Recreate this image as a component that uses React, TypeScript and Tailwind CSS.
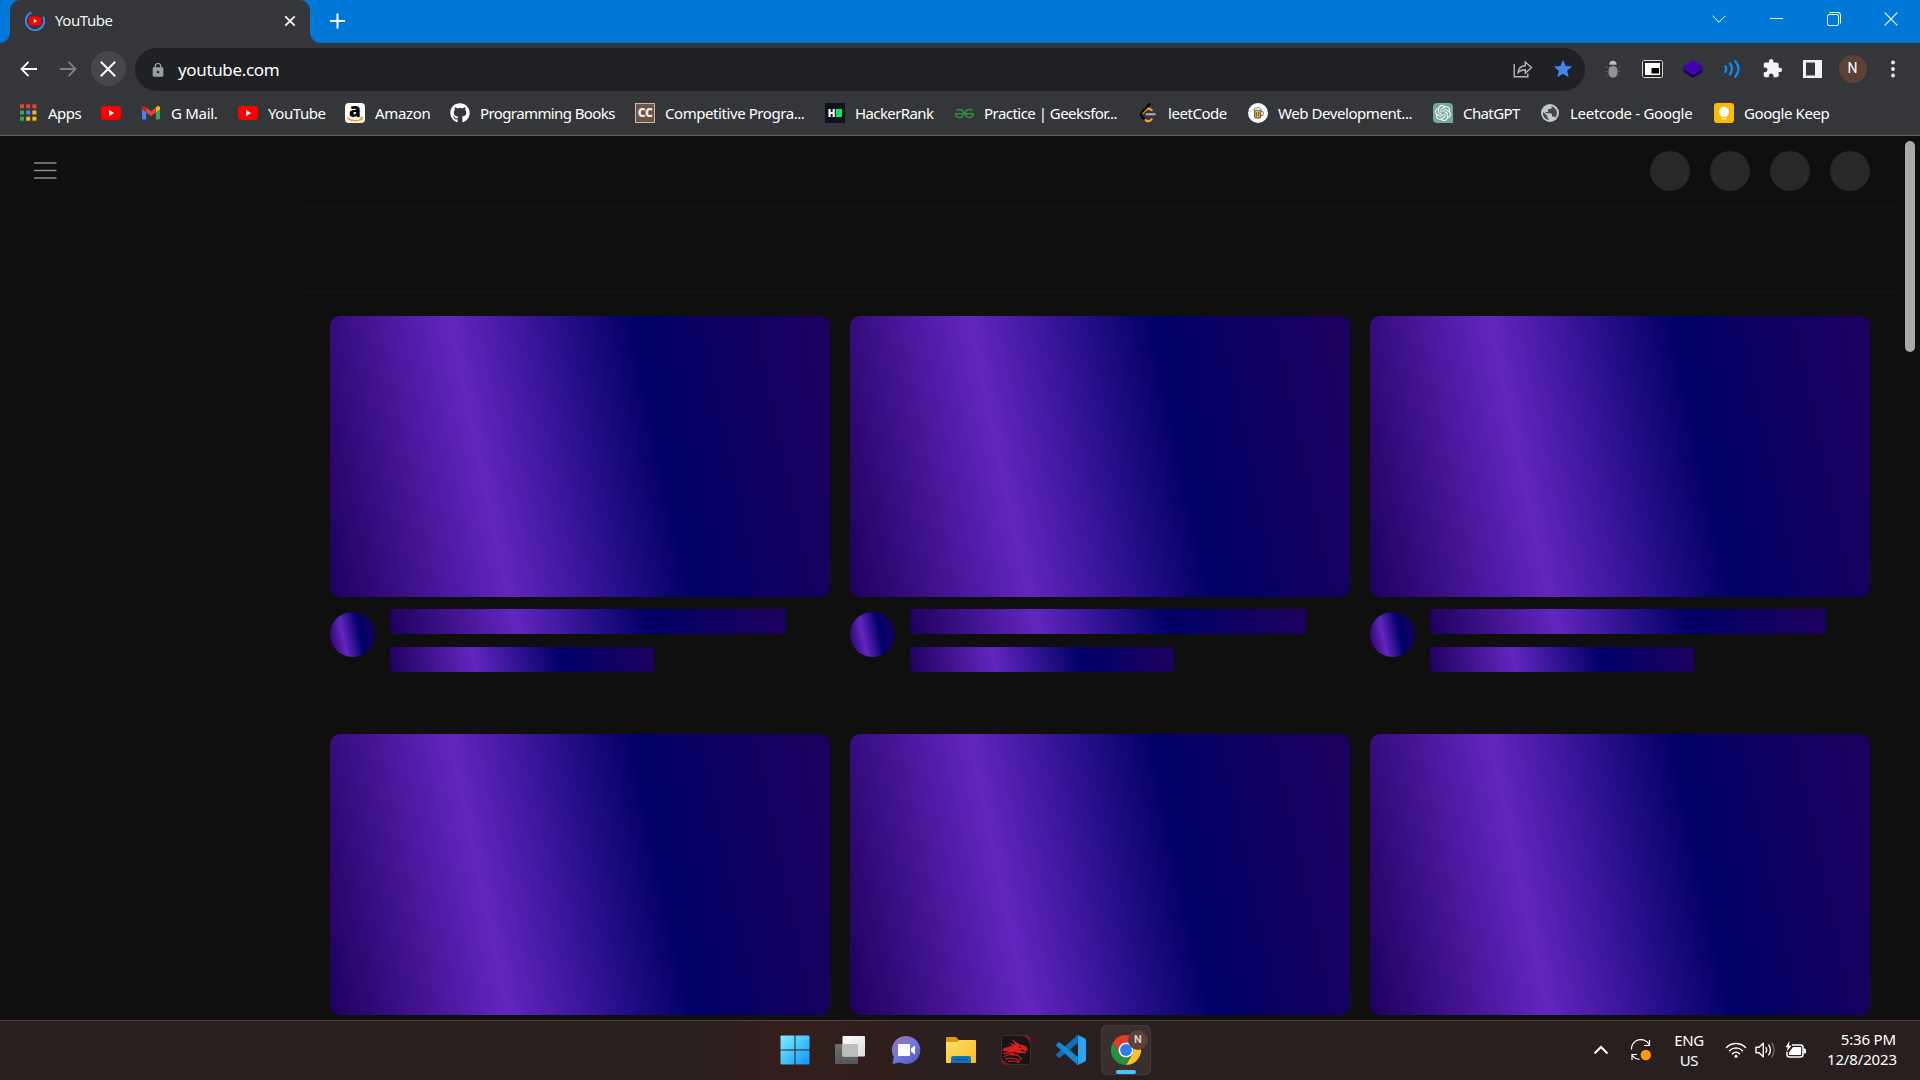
import type { ReactNode } from "react";
import { FaGithub } from "react-icons/fa";
import { SiGeeksforgeeks, SiOpenai } from "react-icons/si";
import { MdExtension, MdStar, MdLock } from "react-icons/md";

function YouTubeIcon({ size = 20 }: { size?: number }) {
  return (
    <svg width={size} height={size} viewBox="0 0 20 20">
      <rect x="0" y="3" width="20" height="14" rx="3.4" fill="#ff0000" />
      <path d="M8 7l5.2 3L8 13z" fill="#fff" />
    </svg>
  );
}

function AppsIcon() {
  const colors = ["#ea4335", "#ea4335", "#ea4335", "#34a853", "#4285f4", "#fbbc05", "#34a853", "#fbbc05", "#fbbc05"];
  return (
    <svg width="20" height="20" viewBox="0 0 20 20">
      {colors.map((c, i) => (
        <rect key={i} x={2 + (i % 3) * 6.2} y={1.3 + Math.floor(i / 3) * 6.2} width="4" height="4" fill={c} />
      ))}
    </svg>
  );
}

function GmailIcon() {
  return (
    <svg width="20" height="20" viewBox="0 0 20 20">
      <path d="M1 6v9.2c0 .8.5 1.3 1.300 1.300H5.200V9.300z" fill="#4285f4" />
      <path d="M19 6v9.200c0 .8-.5 1.300-1.300 1.300h-2.900V9.300z" fill="#34a853" />
      <path d="M14.800 4.700v4.800L19 6.300V5c0-1.700-1.800-2.500-3-1.500z" fill="#fbbc04" />
      <path d="M1 5c0-1.700 1.800-2.500 3-1.500l1.200 1.200v4.800L1 6.300z" fill="#c5221f" />
      <path d="M5.200 4.500L10 8.200l4.800-3.700v5L10 13.100 5.200 9.500z" fill="#ea4335" />
    </svg>
  );
}

function AmazonIcon() {
  return (
    <span className="relative flex h-5 w-5 items-center justify-center rounded-[4px] bg-white">
      <span className="-mt-[5px] font-['Open_Sans',sans-serif] text-[19px] leading-none font-extrabold text-black">a</span>
      <svg className="absolute inset-0" width="20" height="20" viewBox="0 0 20 20">
        <path d="M2.500 15.200c4.200 3.300 10.400 3.300 14 .8" stroke="#ff9900" strokeWidth="1.500" fill="none" strokeLinecap="round" />
        <path d="M14.600 14.600l3.200-.2-.9 3" stroke="#ff9900" strokeWidth="1.100" fill="none" />
      </svg>
    </span>
  );
}

function CodeChefIcon() {
  return (
    <span className="flex h-5 w-5 items-center justify-center border border-[#c9b8a8] bg-[#6f5544] font-['Open_Sans',sans-serif] text-[12px] leading-none font-extrabold tracking-[-0.5px] text-[#f3ece4]">
      CC
    </span>
  );
}

function HackerRankIcon() {
  return (
    <span className="flex h-5 w-5 items-center justify-center gap-px bg-[#0e141e]">
      <span className="font-['Open_Sans',sans-serif] text-[10px] leading-none font-extrabold text-white">H</span>
      <span className="h-2 w-[6px] bg-[#00ea64]" />
    </span>
  );
}

function LeetCodeIcon() {
  return (
    <svg width="20" height="20" viewBox="0 0 20 20" fill="none" strokeLinecap="round">
      <path d="M13.800 7.300c-2-2-4.200-2.100-6-.3L4.500 10.300" stroke="#ffa116" strokeWidth="2" />
      <path d="M11.500 1.200L4.600 8.300c-2.200 2.100-1.800 4.200-.3 5.600l2.600 2.600" stroke="#070706" strokeWidth="2.400" />
      <path d="M7.600 17.100c1.800 1.700 4.300 1.500 6-.7" stroke="#ffa116" strokeWidth="2.300" />
      <path d="M8.600 11.200h8.200" stroke="#b3b3b3" strokeWidth="2" />
    </svg>
  );
}

function BeerIcon() {
  return (
    <svg width="20" height="20" viewBox="0 0 20 20">
      <circle cx="10" cy="10" r="10" fill="#fff" />
      <rect x="6.700" y="6" width="6" height="9" rx="1" fill="#f5b324" stroke="#4a4a55" strokeWidth="1" />
      <path d="M6 7.500c-.6-2 1.300-3 2.200-2.300 1-1.300 3-.9 3.400.1 1.500-.2 2 1 1.500 2.200z" fill="#e9e4da" stroke="#4a4a55" strokeWidth=".6" />
      <path d="M13 8.300h1.300c.7 0 1 .5 1 1v2.200c0 .7-.5 1-1 1H13M8.600 9v4.500M10.700 9v4.500" stroke="#4a4a55" strokeWidth=".8" fill="none" />
    </svg>
  );
}

function ChatGptIcon() {
  return (
    <span className="flex h-5 w-5 items-center justify-center rounded-[4px] rounded-br-none bg-[#74aa9c]">
      <SiOpenai size={16} color="#fff" />
    </span>
  );
}

function GlobeIcon() {
  return (
    <svg width="20" height="20" viewBox="0 0 20 20">
      <circle cx="10" cy="10" r="9" fill="#c4c7cc" />
      <path
        d="M11.800 3.200l-.3 1.900c-.1.700-.6 1-1.200 1H8.200v1.800c0 .6-.4 1-1 1H5.600v1.400h4.600c1.200 0 1.800.7 1.800 1.700v1.400h1.800c.8 0 1.300.4 1.700 1.100 2.800-3.800 1.600-9-3.700-11.300zM3.100 9l4.200 4.100v1.200c0 .8.700 1.300 1.600 1.400v1.200C4.800 16.300 2.400 12.800 3.100 9z"
        fill="#44464b"
      />
    </svg>
  );
}

function KeepIcon() {
  return (
    <svg width="20" height="20" viewBox="0 0 20 20">
      <rect width="20" height="20" rx="3" fill="#ffba00" />
      <circle cx="10" cy="8.800" r="5.100" fill="#fff" />
      <path d="M7.300 11h5.400v2.800H7.300zM7.700 14.800h4.600v1.400H7.700z" fill="#fff" />
      <path d="M7.300 13.800h5.400v.8H7.300z" fill="#ffba00" />
    </svg>
  );
}

const bookmarks: { icon: ReactNode; label: string; width: string; tracking: string }[] = [
  { icon: <AppsIcon />, label: "Apps", width: "w-[83px]", tracking: "tracking-[-0.5px]" },
  { icon: <YouTubeIcon />, label: "", width: "w-[40px]", tracking: "" },
  { icon: <GmailIcon />, label: "G Mail.", width: "w-[97px]", tracking: "tracking-[-0.3px]" },
  { icon: <YouTubeIcon />, label: "YouTube", width: "w-[107px]", tracking: "tracking-[-0.45px]" },
  { icon: <AmazonIcon />, label: "Amazon", width: "w-[105px]", tracking: "tracking-[-0.35px]" },
  { icon: <FaGithub size={20} color="#fff" />, label: "Programming Books", width: "w-[185px]", tracking: "tracking-[-0.6px]" },
  { icon: <CodeChefIcon />, label: "Competitive Progra...", width: "w-[190px]", tracking: "tracking-[-0.43px]" },
  { icon: <HackerRankIcon />, label: "HackerRank", width: "w-[129px]", tracking: "tracking-[-0.6px]" },
  { icon: <SiGeeksforgeeks size={19} color="#2f8d46" />, label: "Practice | Geeksfor...", width: "w-[184px]", tracking: "tracking-[-0.53px]" },
  { icon: <LeetCodeIcon />, label: "leetCode", width: "w-[110px]", tracking: "tracking-[-0.45px]" },
  { icon: <BeerIcon />, label: "Web Development...", width: "w-[185px]", tracking: "tracking-[-0.43px]" },
  { icon: <ChatGptIcon />, label: "ChatGPT", width: "w-[107px]", tracking: "tracking-[-0.6px]" },
  { icon: <GlobeIcon />, label: "Leetcode - Google", width: "w-[174px]", tracking: "tracking-[-0.3px]" },
  { icon: <KeepIcon />, label: "Google Keep", width: "w-[130px]", tracking: "tracking-[-0.42px]" },
];

function TitleBar() {
  return (
    <header className="flex h-[43px] shrink-0 bg-[#0078d7] text-white">
      <div className="h-[10px] w-[10px] self-end bg-[radial-gradient(circle_at_0_0,#0078d7_9.500px,#35363a_10px)]" />
      <div className="flex w-[300px] items-center rounded-t-[10px] bg-[#35363a] pr-[14px] pb-px pl-[15px]">
        <svg width="20" height="20" viewBox="0 0 20 20">
          <path d="M6.300 1.500A9.200 9.200 0 1 0 18.200 5.800" stroke="#4380e8" strokeWidth="2" fill="none" />
          <rect x="3.800" y="5.500" width="12.400" height="9" rx="2" fill="#ff0000" />
          <path d="M8.800 8l3.300 2-3.300 2z" fill="#fff" />
        </svg>
        <span className="ml-[10px] pb-px text-[15px] tracking-[-0.45px] text-[#f1f3f4]">YouTube</span>
        <svg className="ml-auto" width="12" height="12" viewBox="0 0 12 12">
          <path d="M1.300 1.300l9.400 9.400M10.700 1.300l-9.400 9.400" stroke="#f1f3f4" strokeWidth="1.900" />
        </svg>
      </div>
      <div className="h-[10px] w-[10px] self-end bg-[radial-gradient(circle_at_100%_0,#0078d7_9.500px,#35363a_10px)]" />
      <svg className="mt-[13px] ml-[10px]" width="15" height="16" viewBox="0 0 15 16">
        <path d="M7.500 .5v15M0 8h15" stroke="#fff" strokeWidth="2" />
      </svg>
      <div className="ml-auto flex h-[37px]">
        <div className="flex w-[57.500px] items-center justify-center">
          <svg width="14" height="8" viewBox="0 0 14 8"><path d="M.6.8L7 7.200 13.400.8" stroke="#fff" strokeWidth="1" fill="none" /></svg>
        </div>
        <div className="flex w-[57.500px] items-center justify-center">
          <div className="h-px w-[13px] bg-white" />
        </div>
        <div className="flex w-[57.500px] items-center justify-center">
          <svg width="14" height="14" viewBox="0 0 14 14" fill="none" stroke="#fff">
            <rect x=".5" y="2.500" width="11" height="11" rx="1.500" />
            <path d="M2.500.5h8.500a2.500 2.500 0 0 1 2.500 2.500v8.500" />
          </svg>
        </div>
        <div className="flex w-[57.500px] items-center justify-center">
          <svg width="14" height="14" viewBox="0 0 14 14"><path d="M.7.7l12.600 12.600M13.300.7L.7 13.300" stroke="#fff" strokeWidth="1.100" /></svg>
        </div>
      </div>
    </header>
  );
}

function Slot({ children }: { children: ReactNode }) {
  return <div className="mb-0.5 flex h-10 w-10 shrink-0 items-center justify-center">{children}</div>;
}

function Toolbar() {
  return (
    <div className="flex h-[53px] items-center pl-2">
      <Slot>
        <svg width="17" height="16" viewBox="0 0 17 16" fill="none" stroke="#fff" strokeWidth="1.800"><path d="M8.500.8L1.500 8l7 7.200M1.500 8H17" /></svg>
      </Slot>
      <Slot>
        <svg width="17" height="16" viewBox="0 0 17 16" fill="none" stroke="#808184" strokeWidth="1.800"><path d="M8.500.8L15.500 8l-7 7.200M15.500 8H0" /></svg>
      </Slot>
      <Slot>
        <div className="flex h-[35px] w-[35px] items-center justify-center rounded-full bg-[#46474b]">
          <svg width="16" height="16" viewBox="0 0 16 16"><path d="M.8.8l14.400 14.400M15.200.8L.8 15.200" stroke="#fff" strokeWidth="2" /></svg>
        </div>
      </Slot>
      <div className="ml-[7px] flex h-[43px] w-[1450px] items-center rounded-full bg-[#202124] pr-0.5 pl-[15px]">
        <MdLock size={16} color="#9aa0a6" />
        <span className="ml-3 grow text-[17px] tracking-[-0.35px] text-white">youtube.com</span>
        <Slot>
          <svg width="20" height="18" viewBox="0 0 20 18" fill="none" stroke="#b4b6ba" strokeWidth="1.400">
            <path d="M1.200 4v12.800h13.600V13.500" />
            <path d="M5 12.500c.4-4.500 2.800-6.600 7.300-6.800V2l6.200 5.600-6.200 5.500V9.700C9 9.700 6.800 10.500 5 12.500z" />
          </svg>
        </Slot>
        <Slot><MdStar size={22} color="#4285f4" /></Slot>
      </div>
      <div className="ml-[7.500px] flex">
        <Slot>
          <svg width="16" height="18" viewBox="0 0 16 18">
            <path d="M4.300 4.800a3.700 4 0 0 1 7.400 0z" fill="#bdbdbd" />
            <rect x="3.500" y="6" width="9" height="11.500" rx="4.200" fill="#929292" />
            <path d="M0 6.500l3 1.200M16 6.500l-3 1.200M.3 11.500h2.800M15.700 11.500h-2.800M.8 16l2.500-1.500M15.200 16l-2.500-1.500" stroke="#55565a" />
          </svg>
        </Slot>
        <Slot>
          <svg width="21" height="18" viewBox="0 0 21 18">
            <rect x=".7" y=".7" width="19.600" height="16.600" rx="2" fill="#fff" stroke="#dcdcdc" strokeWidth="1.200" />
            <rect x="2" y="2" width="17" height="14" fill="#fff" stroke="#000" strokeWidth="1.700" />
            <rect x="9.500" y="8" width="7.500" height="5.500" fill="#000" />
          </svg>
        </Slot>
        <Slot>
          <svg width="20" height="20" viewBox="0 0 20 20">
            <path d="M.5 9.500L10 16l9.500-6.500V13L10 19 .5 13z" fill="#200066" />
            <path d="M10 1l9.800 6.500V9L10 15 .2 9V7.500z" fill="#4400b0" />
          </svg>
        </Slot>
        <Slot>
          <svg width="17" height="18" viewBox="0 0 17 18" fill="none" stroke="#0d8cf2" strokeWidth="2.300" strokeLinecap="round">
            <path d="M1.300 6.200c1.300 2 1.300 3.800 0 5.800M6 3.500c2.600 3.800 2.600 7.200 0 11M11.300 1.300c4.300 5 4.300 10.400 0 15.400" />
          </svg>
        </Slot>
        <Slot><MdExtension size={21} color="#f1f3f4" /></Slot>
        <Slot>
          <svg width="19" height="18" viewBox="0 0 19 18">
            <path fillRule="evenodd" d="M0 0h19v18H0zM3 2.500v13h9v-13z" fill="#f1f3f4" />
          </svg>
        </Slot>
        <Slot><div className="flex h-7 w-7 items-center justify-center rounded-full bg-[#5d4037] font-[Roboto,sans-serif] text-[14px] text-white">N</div></Slot>
        <Slot>
          <svg width="4" height="18" viewBox="0 0 4 18" fill="#f1f3f4"><circle cx="2" cy="2.500" r="1.900" /><circle cx="2" cy="9" r="1.900" /><circle cx="2" cy="15.500" r="1.900" /></svg>
        </Slot>
      </div>
    </div>
  );
}

function BookmarkBar() {
  return (
    <nav className="flex h-10 items-center border-b border-[#5f6063] pb-[5px] pl-[18px]">
      {bookmarks.map((b, i) => (
        <div key={i} className={`flex shrink-0 items-center gap-[10px] ${b.width}`}>
          <span className="flex h-5 w-5 shrink-0 items-center justify-center">{b.icon}</span>
          <span className={`mb-px text-[15px] leading-5 whitespace-nowrap text-white ${b.tracking}`}>{b.label}</span>
        </div>
      ))}
    </nav>
  );
}

const shimmer = "bg-[linear-gradient(78deg,#1e005e_0%,#6225bf_32%,#000066_65%,#1e005e_100%)]";

function SkeletonCard() {
  return (
    <article className="h-[418px]">
      <div className={`h-[281px] rounded-[10px] ${shimmer}`} />
      <div className="flex gap-[15px] pt-3">
        <div className={`mt-[3px] h-[45px] w-[45px] rounded-full ${shimmer}`} />
        <div className="flex flex-col gap-[13px]">
          <div className={`h-[25px] w-[396px] rounded-[2px] ${shimmer}`} />
          <div className={`h-[25px] w-[264px] rounded-[2px] ${shimmer}`} />
        </div>
      </div>
    </article>
  );
}

function Page() {
  return (
    <main className="flex h-[884px] overflow-hidden bg-[#0f0f0f]">
      <aside className="w-[300px] shrink-0 pt-[26px] pl-[34px]">
        <svg width="23" height="17" viewBox="0 0 23 17" stroke="#8c8c8c" strokeWidth="1.400"><path d="M0 1h22.500M0 8.500h22.500M0 16h22.500" /></svg>
      </aside>
      <div className="w-[1600px] shrink-0">
        <div className="flex h-[71px] justify-end gap-5 border-b border-[#171717] pt-[15px] pr-[30px]">
          {[0, 1, 2, 3].map((i) => (
            <div key={i} className="h-10 w-10 rounded-full bg-[#282828]" />
          ))}
        </div>
        <div className="h-[86px] border-b border-[#171717]" />
        <section className="grid grid-cols-[500px_500px_500px] gap-x-5 pt-[23px] pl-[30px]">
          {[0, 1, 2, 3, 4, 5].map((i) => (
            <SkeletonCard key={i} />
          ))}
        </section>
      </div>
      <div className="w-5 shrink-0 pt-[5px] pl-[5px]">
        <div className="h-[211px] w-[10px] rounded-full bg-[#a9a9a9]" />
      </div>
    </main>
  );
}

function ChromeIcon() {
  return (
    <svg width="30" height="30" viewBox="0 0 30 30">
      <path d="M2 7.500A15 15 0 0 1 28 7.500H15A7.500 7.500 0 0 0 8.500 11.250L8.500 18.750z" fill="#e33b2e" />
      <path d="M28 7.500A15 15 0 0 1 15 30L21.500 18.750A7.500 7.500 0 0 0 15 7.500z" fill="#fcc31e" />
      <path d="M15 30A15 15 0 0 1 2 7.500L8.500 18.750A7.500 7.500 0 0 0 21.500 18.750z" fill="#229342" />
      <circle cx="15" cy="15" r="7.500" fill="#fff" />
      <circle cx="15" cy="15" r="5.900" fill="#2e7cf0" />
    </svg>
  );
}

function TaskSlot({ children }: { children: ReactNode }) {
  return <div className="flex w-[55.250px] shrink-0 items-center justify-center pb-px">{children}</div>;
}

function Taskbar() {
  return (
    <footer className="flex h-[60px] border-t border-[#4a4342] bg-[linear-gradient(90deg,#2a1f1f_0,#281f1e_700px,#331e1c_770px,#321e1c_840px,#291f1e_940px,#291f1f_100%)] pl-[767.500px] text-white">
      <TaskSlot>
        <svg width="30" height="30" viewBox="0 0 30 30">
          <defs>
            <linearGradient id="win" x1="0" y1="0" x2="30" y2="30" gradientUnits="userSpaceOnUse"><stop stopColor="#7df4ff" /><stop offset="1" stopColor="#0a93ff" /></linearGradient>
          </defs>
          <path d="M1.500.5H14.500V14.500H.5V1.500a1 1 0 0 1 1-1zM15.500.5h13a1 1 0 0 1 1 1v13h-14zM.5 15.500h14v14h-13a1 1 0 0 1-1-1zM15.500 15.500h14v13a1 1 0 0 1-1 1h-13z" fill="url(#win)" />
        </svg>
      </TaskSlot>
      <TaskSlot>
        <svg width="30" height="28" viewBox="0 0 30 28">
          <defs>
            <linearGradient id="tva" x1="0" y1="0" x2="1" y2="1"><stop stopColor="#fff" /><stop offset="1" stopColor="#dcdcdc" /></linearGradient>
            <linearGradient id="tvb" x1="0" y1="0" x2="0" y2="1"><stop stopColor="#707070" /><stop offset="1" stopColor="#555" /></linearGradient>
          </defs>
          <rect x="0" y="8" width="23" height="20" rx="1" fill="url(#tvb)" />
          <rect x="7.500" y="0" width="22.500" height="20.500" rx="1" fill="url(#tva)" />
          <path d="M7.500 8H23v12.500H7.500z" fill="#bdbdbd" />
        </svg>
      </TaskSlot>
      <TaskSlot>
        <svg width="30" height="30" viewBox="0 0 30 30">
          <defs>
            <linearGradient id="chat" x1="4" y1="2" x2="26" y2="28" gradientUnits="userSpaceOnUse"><stop stopColor="#9a6fb8" /><stop offset=".5" stopColor="#7078d8" /><stop offset="1" stopColor="#5558c4" /></linearGradient>
          </defs>
          <path d="M15.500 1A14 14 0 1 1 9 27.500L1.500 29l1.300-7A14 14 0 0 1 15.500 1z" fill="url(#chat)" />
          <rect x="7" y="9" width="12" height="12" rx="1" fill="#fff" />
          <path d="M20 13.500L24 10.500v9l-4-3z" fill="#fff" />
        </svg>
      </TaskSlot>
      <TaskSlot>
        <svg width="30" height="28" viewBox="0 0 30 28">
          <defs>
            <linearGradient id="fold" x1="0" y1="0" x2="1" y2="1"><stop stopColor="#ffdf73" /><stop offset="1" stopColor="#fcb91c" /></linearGradient>
          </defs>
          <path d="M0 2a1 1 0 0 1 1-1h9l3 3h16v4H0z" fill="#dd9a08" />
          <path d="M0 6h11l2.500-2H29a1 1 0 0 1 1 1v21a1 1 0 0 1-1 1H1a1 1 0 0 1-1-1z" fill="url(#fold)" />
          <path d="M5 27v-5a2 2 0 0 1 2-2h16a2 2 0 0 1 2 2v5z" fill="#1272c0" />
          <path d="M8.500 23.500h13" stroke="#0b4a8a" strokeWidth="1.200" />
        </svg>
      </TaskSlot>
      <TaskSlot>
        <svg width="30" height="30" viewBox="0 0 30 30">
          <rect x=".5" y=".5" width="29" height="29" rx="3.500" fill="#161414" stroke="#383131" />
          <path d="M22 1h4.500A2.500 2.500 0 0 1 29 3.500V9l-2.500-5zM1 23l3 4 4 2H3.500A2.500 2.500 0 0 1 1 26.500z" fill="#8d0f1c" />
          <path d="M1 15.500c1.500-2.500 4-3.500 6.500-3.500 1.500-.8 3-1.200 4.500-1L7.500 7.500l7 2.200L10.500 4l8.500 5.500c4 .3 7 2 7.500 4.500l-.2 2-2 .2-2.300-1.400-3.500.4 4 1.400 3 .2-1 1.400-5-.3c-2 .7-4-.2-5.500-1-4 1-8-.5-13-1.400z" fill="#d8201f" />
          <path d="M2 18.500c4-1 9-.5 12 .5M3 22c2-2.500 8-3 13-1.500M4 24c5-2 11-.5 15 1.500M7 26.500c4-1 8-.5 12 1M16 19c2 2.500 3 4 5 5.500" stroke="#d8201f" strokeWidth="1.100" fill="none" />
          <path d="M18 11.500l3 1-3 .3z" fill="#161414" />
        </svg>
      </TaskSlot>
      <TaskSlot>
        <svg width="30" height="30" viewBox="0 0 30 30">
          <path d="M21.500 0L22 8 4 22.500c-.6.500-1.200.4-1.700 0l-1.800-1.700c-.6-.5-.6-1.300 0-1.800z" fill="#0a70b8" />
          <path d="M21.500 30L22 22 4 7.500c-.6-.5-1.200-.4-1.700 0L.5 9.200c-.6.500-.6 1.300 0 1.800z" fill="#1389d6" />
          <path d="M21.500 0l7.300 3.200c.8.400 1.200 1 1.200 1.800v20c0 .8-.4 1.400-1.200 1.800L21.500 30c-.8.200-1.300 0-1.800-.5 1 .6 2.300.2 2.300-1.200V1.700c0-1.400-1.300-1.800-2.300-1.200.5-.5 1-.7 1.800-.5z" fill="#2ba3f0" />
        </svg>
      </TaskSlot>
      <div className="relative mt-1 ml-0.5 flex h-[50px] w-[50px] items-center justify-center rounded-[5px] border border-[#443b3a] bg-[#382f2e]">
        <ChromeIcon />
        <div className="absolute top-[4px] left-[26px] flex h-5 w-5 items-center justify-center rounded-full bg-[#5d4037] font-[Roboto,sans-serif] text-[11px] font-bold text-[#d8cfcb]">N</div>
        <div className="absolute bottom-0 left-[14px] h-1 w-5 rounded-full bg-[#4cc2ff]" />
      </div>
      <div className="ml-auto flex items-center pr-6 pb-0.5">
        <svg className="mr-[21px]" width="16" height="10" viewBox="0 0 16 10"><path d="M1.500 8.500L8 2l6.500 6.500" stroke="#fff" strokeWidth="2" fill="none" /></svg>
        <svg className="mr-5" width="22" height="22" viewBox="0 0 22 22" fill="none">
          <path d="M1.500 10.500A9.300 9.300 0 0 1 19 5.500M19.500 1v5.500H14M2 21v-5.500h5M2.500 16.500c1.700 2.500 4 3.600 7 3.800" stroke="#fff" strokeWidth="1.200" />
          <circle cx="15.800" cy="16" r="5.200" fill="#ff9a0a" />
        </svg>
        <div className="mr-[19px] w-[34px] text-center text-[15px] leading-5 tracking-[-0.4px]">ENG<br />US</div>
        <svg className="mr-2" width="22" height="18" viewBox="0 0 22 18" fill="none" stroke="#fff" strokeWidth="1.500" strokeLinecap="round">
          <path d="M1.500 6.500a13.500 13.500 0 0 1 19 0M4.500 9.800a9.200 9.200 0 0 1 13 0M7.500 12.800a5 5 0 0 1 7 0" />
          <circle cx="11" cy="15.300" r="1.500" fill="#fff" stroke="none" />
        </svg>
        <svg className="mr-[9px]" width="21" height="18" viewBox="0 0 21 18" fill="none" stroke="#fff" strokeWidth="1.400" strokeLinecap="round" strokeLinejoin="round">
          <path d="M1 6.300h3l4.300-4v13.400l-4.300-4H1z" />
          <path d="M11 6.500c1 1.600 1 3.400 0 5M13.800 4.200c2 3 2 6.600 0 9.600" />
          <path d="M16.800 2c3 4.500 3 9.500 0 14" stroke="#6b6362" />
        </svg>
        <svg className="mr-[21px]" width="21" height="18" viewBox="0 0 21 18">
          <path d="M7 4h8.500A2.500 2.500 0 0 1 18 6.500v7a2.500 2.500 0 0 1-2.500 2.500h-11A2.500 2.500 0 0 1 2 13.500V11" stroke="#fff" strokeWidth="1.500" fill="none" />
          <path d="M8 6h7.200c.6 0 1 .4 1 1v6c0 .6-.4 1-1 1H5c-.6 0-1-.4-1-1v-1.500z" fill="#fff" />
          <path d="M18.500 7.500h1c.8 0 1.500.6 1.500 1.300v2.400c0 .7-.7 1.300-1.500 1.300h-1zM4.500 0L.5 6.200h2.300L1.500 11l5-6.500H4z" fill="#fff" />
        </svg>
        <div className="w-[69px] text-right text-[15px] leading-5 tracking-[-0.15px] whitespace-nowrap">
          <div className="-mt-0.5">5:36 PM</div>
          <div>12/8/2023</div>
        </div>
      </div>
    </footer>
  );
}

export default function App() {
  return (
    <div className="flex h-[1080px] w-[1920px] flex-col overflow-hidden bg-[#0f0f0f] font-['Noto_Sans',sans-serif]">
      <TitleBar />
      <div className="bg-[#35363a]">
        <Toolbar />
        <BookmarkBar />
      </div>
      <Page />
      <Taskbar />
    </div>
  );
}
